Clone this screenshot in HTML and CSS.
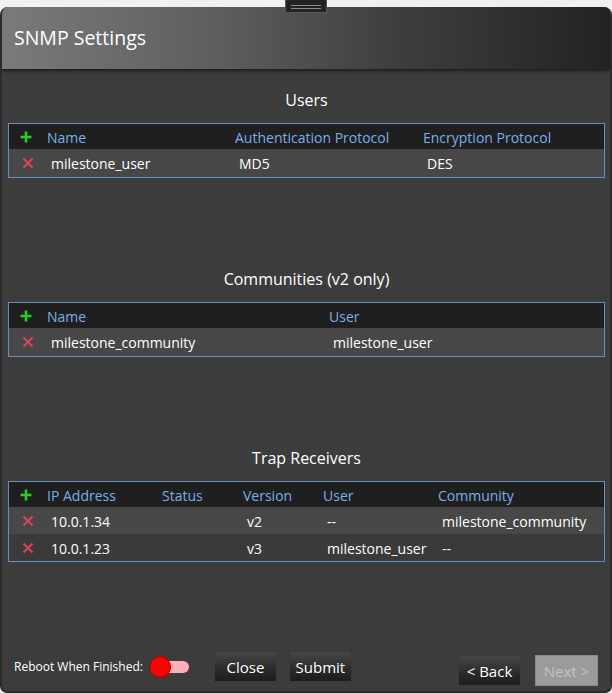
FILE: index.html
```html
<!DOCTYPE html>
<html>
<head>
<meta charset="utf-8">
<link rel="stylesheet" href="styles.css">
</head>
<body>
<div class="handle"><span></span><span></span></div>
<div class="window">
  <header class="titlebar">SNMP Settings</header>

  <section class="section">
    <h2 class="section-title">Users</h2>
    <div class="table users">
      <div class="row head">
        <div class="cell icon"><svg width="12" height="12" viewBox="0 0 12 12"><path d="M6 0.5V11.5M0.5 6H11.5" class="plus"/></svg></div>
        <div class="cell">Name</div>
        <div class="cell">Authentication Protocol</div>
        <div class="cell">Encryption Protocol</div>
      </div>
      <div class="row data light">
        <div class="cell icon"><svg width="12" height="12" viewBox="0 0 12 12"><path d="M1.5 1.5L10.5 10.5M10.5 1.5L1.5 10.5" class="cross"/></svg></div>
        <div class="cell">milestone_user</div>
        <div class="cell">MD5</div>
        <div class="cell">DES</div>
      </div>
    </div>
  </section>

  <section class="section">
    <h2 class="section-title">Communities (v2 only)</h2>
    <div class="table communities">
      <div class="row head">
        <div class="cell icon"><svg width="12" height="12" viewBox="0 0 12 12"><path d="M6 0.5V11.5M0.5 6H11.5" class="plus"/></svg></div>
        <div class="cell">Name</div>
        <div class="cell">User</div>
      </div>
      <div class="row data light">
        <div class="cell icon"><svg width="12" height="12" viewBox="0 0 12 12"><path d="M1.5 1.5L10.5 10.5M10.5 1.5L1.5 10.5" class="cross"/></svg></div>
        <div class="cell">milestone_community</div>
        <div class="cell">milestone_user</div>
      </div>
    </div>
  </section>

  <section class="section">
    <h2 class="section-title">Trap Receivers</h2>
    <div class="table traps">
      <div class="row head">
        <div class="cell icon"><svg width="12" height="12" viewBox="0 0 12 12"><path d="M6 0.5V11.5M0.5 6H11.5" class="plus"/></svg></div>
        <div class="cell">IP Address</div>
        <div class="cell">Status</div>
        <div class="cell">Version</div>
        <div class="cell">User</div>
        <div class="cell">Community</div>
      </div>
      <div class="row data light">
        <div class="cell icon"><svg width="12" height="12" viewBox="0 0 12 12"><path d="M1.5 1.5L10.5 10.5M10.5 1.5L1.5 10.5" class="cross"/></svg></div>
        <div class="cell">10.0.1.34</div>
        <div class="cell"></div>
        <div class="cell">v2</div>
        <div class="cell">--</div>
        <div class="cell">milestone_community</div>
      </div>
      <div class="row data dark">
        <div class="cell icon"><svg width="12" height="12" viewBox="0 0 12 12"><path d="M1.5 1.5L10.5 10.5M10.5 1.5L1.5 10.5" class="cross"/></svg></div>
        <div class="cell">10.0.1.23</div>
        <div class="cell"></div>
        <div class="cell">v3</div>
        <div class="cell">milestone_user</div>
        <div class="cell">--</div>
      </div>
    </div>
  </section>

  <footer class="footer">
    <div class="left-group">
      <span class="reboot-label">Reboot When Finished:</span>
      <span class="toggle"><span class="track"></span><span class="knob"></span></span>
      <button class="btn">Close</button>
      <button class="btn">Submit</button>
    </div>
    <div class="right-group">
      <button class="btn">&lt; Back</button>
      <button class="btn disabled">Next &gt;</button>
    </div>
  </footer>
</div>
</body>
</html>
```

FILE: styles.css
```css
* { box-sizing: border-box; }

html, body {
  margin: 0;
  padding: 0;
  width: 612px;
  height: 693px;
  overflow: hidden;
  background: #f0f0f0;
  font-family: "Segoe UI", "Open Sans", "Noto Sans", sans-serif;
  color: #ffffff;
}

.handle {
  position: absolute;
  left: 285px;
  top: 0;
  width: 42px;
  height: 13px;
  background: #232323;
  border: 1px solid #555;
  border-top: none;
  z-index: 5;
  display: flex;
  flex-direction: column;
  align-items: center;
  justify-content: center;
  gap: 2px;
  padding-top: 1px;
}

.handle span {
  display: block;
  width: 30px;
  height: 1px;
  background: #8a8a8a;
}

.window {
  margin-top: 7px;
  height: 686px;
  width: 612px;
  background: #3c3c3c;
  border: 2px solid #2b2b2b;
  border-top: none;
  border-radius: 8px 8px 7px 7px;
  overflow: hidden;
  display: flex;
  flex-direction: column;
}

.titlebar {
  height: 62px;
  flex: none;
  background: linear-gradient(to right, #7a7a7a 0%, #5e5e5e 35%, #3e3e3e 65%, #222222 100%);
  box-shadow: 0 2px 3px rgba(0, 0, 0, 0.55);
  font-size: 19.5px;
  line-height: 62px;
  padding-left: 12px;
  position: relative;
  z-index: 1;
}

.section {
  height: 179px;
  flex: none;
  padding: 20px 5px 0 6px;
}

.section-title {
  margin: 0 0 12px 0;
  height: 22px;
  font-size: 16px;
  font-weight: normal;
  line-height: 22px;
  text-align: center;
}

.table {
  border: 1px solid #6a8db5;
  font-size: 14px;
}

.row {
  display: grid;
  align-items: center;
}

.users .row { grid-template-columns: 38px 188px 188px 1fr; }
.communities .row { grid-template-columns: 38px 282px 1fr; }
.traps .row { grid-template-columns: 38px 115px 81px 80px 115px 1fr; }

.row.head {
  height: 25px;
  background: #1f1f1f;
  color: #78b0ea;
}

.row.data {
  height: 28px;
}

.row.data.light { background: #474747; }
.row.data.dark { background: #3a3a3a; }
.traps .row.data { height: 27px; }

.cell {
  white-space: nowrap;
  line-height: 20px;
  padding-top: 2px;
}

.row.data .cell { padding-left: 4px; }

.cell.icon {
  display: flex;
  align-items: center;
  padding-top: 0;
  padding-left: 11px;
}

.row.data .cell.icon { padding-left: 13px; }

.cell.icon svg { display: block; }

.plus {
  stroke: #22d022;
  stroke-width: 2.6;
  fill: none;
}

.cross {
  stroke: #e0405e;
  stroke-width: 2;
  fill: none;
}

.footer {
  margin-top: auto;
  display: flex;
  justify-content: space-between;
  align-items: flex-end;
  padding: 0 12px 5px 12px;
}

.left-group {
  display: flex;
  align-items: center;
  margin-bottom: 4px;
}

.right-group {
  display: flex;
  gap: 14px;
}

.reboot-label {
  font-size: 12px;
  color: #ffffff;
  margin-right: 6px;
}

.toggle {
  position: relative;
  width: 40px;
  height: 22px;
  margin-right: 25px;
  display: flex;
  align-items: center;
}

.toggle .track {
  position: absolute;
  left: 11px;
  top: 5px;
  width: 29px;
  height: 12px;
  background: #ffb0bd;
  border-radius: 6px;
}

.toggle .knob {
  position: absolute;
  left: 0;
  top: 0;
  width: 22px;
  height: 22px;
  background: #ff0000;
  border: 1px solid #9a0000;
  border-radius: 50%;
}

.btn {
  width: 63px;
  height: 31px;
  font-family: "Segoe UI", "Open Sans", "Noto Sans", sans-serif;
  font-size: 15px;
  color: #ffffff;
  background: linear-gradient(to bottom, #474747 0%, #2a2a2a 60%, #1d1d1d 100%);
  border: 1px solid #3a3a3a;
  padding: 0;
  margin-right: 12px;
}

.right-group .btn { margin-right: 0; }

.btn.disabled {
  background: #9b9b9b;
  color: #c4c4c4;
  border: 1px solid #8a8a8a;
}
```
